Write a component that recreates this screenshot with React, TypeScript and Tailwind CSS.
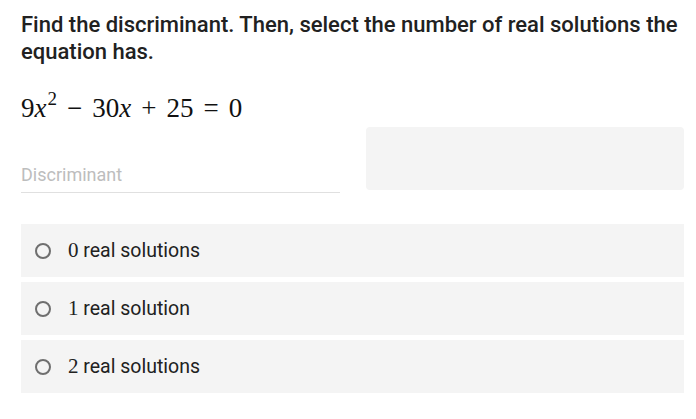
import { useState } from 'react';

const options = ['0 real solutions', '1 real solution', '2 real solutions'];

export default function App() {
  const [value, setValue] = useState('');
  const [selected, setSelected] = useState<number | null>(null);

  return (
    <div className="w-[696px] h-[419px] bg-white pl-[21px] pr-[12px] pt-[11px] text-[#212121] font-['Roboto',sans-serif]">
      <h1 className="text-[22px] font-medium leading-[27px] pr-[6px]">
        Find the discriminant. Then, select the number of real solutions the equation has.
      </h1>

      {/* equation */}
      <div className="mt-[28px] h-[30px] text-[27px] leading-[30px] font-['Liberation_Serif',serif] text-[#111] whitespace-nowrap">
        9<i>x</i>
        <span className="relative -top-[12px] text-[19px] ml-[1px]">2</span>
        <span className="mx-[10px]">−</span>30<i>x</i>
        <span className="mx-[10px]">+</span>25
        <span className="mx-[10px]">=</span>0
      </div>

      <div className="mt-[4px] flex gap-[26px]">
        <div className="w-[319px] flex flex-col justify-end">
          <input
            value={value}
            onChange={(e) => setValue(e.target.value)}
            placeholder="Discriminant"
            className="w-full h-[40px] text-[18px] text-[#212121] placeholder:text-[#bdbdbd] outline-none border-b border-[#e0e0e0] bg-transparent mb-[-3px] pt-[3px]"
          />
        </div>
        <div className="flex-1 h-[63px] rounded-[4px] bg-[#f4f4f4]" />
      </div>

      <div className="mt-[34px] flex flex-col gap-[5px]">
        {options.map((opt, i) => {
          const [num, ...rest] = opt.split(' ');
          return (
            <button
              key={opt}
              onClick={() => setSelected(i)}
              className="h-[53px] bg-[#f4f4f4] flex items-center pl-[14px] text-left"
            >
              <span className="w-[16px] h-[16px] rounded-full border-2 border-[#6f6f6f] flex items-center justify-center">
                {selected === i && <span className="w-[8px] h-[8px] rounded-full bg-[#6f6f6f]" />}
              </span>
              <span className="ml-[17px] text-[19.5px] text-[#212121]">
                <span className="font-['Liberation_Serif',serif] text-[21px]">{num}</span> {rest.join(' ')}
              </span>
            </button>
          );
        })}
      </div>
    </div>
  );
}
